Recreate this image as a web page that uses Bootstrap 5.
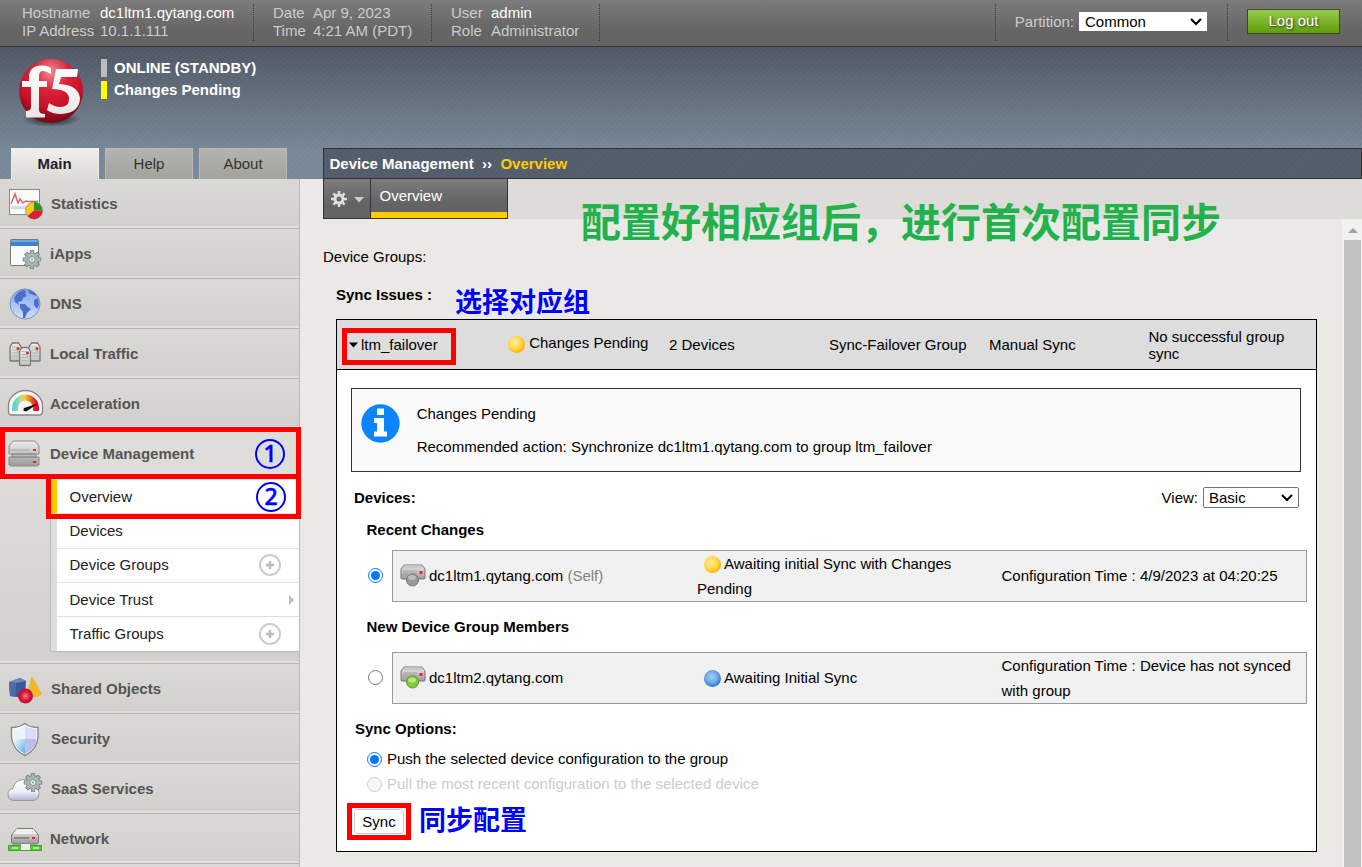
<!DOCTYPE html>
<html lang="en">
<head>
<meta charset="utf-8">
<title>Device Management - Overview</title>
<meta name="viewport" content="width=device-width, initial-scale=1">
<link href="https://cdn.jsdelivr.net/npm/bootstrap@5.3.0/dist/css/bootstrap.min.css" rel="stylesheet">
<style>
body{font-family:"Liberation Sans",Arial,sans-serif;font-size:15px;line-height:18px;color:#000;background:#eae9e5;height:867px;overflow:hidden}
svg{display:block;flex:none}
.topbar{height:47px;background:linear-gradient(#7c7c7c,#646464 70%,#646464);border-bottom:1px solid #333;color:#ccc;padding:4px 0 0 22px}
.sep{width:2px;height:37px;border-left:1px dotted #3a3a3a;flex:none}
.white{color:#fff}
.pick{appearance:none;font-size:15px;line-height:18px;padding:0 0 0 6px;border:0;border-radius:0;color:#000;background:#fff url("data:image/svg+xml,%3Csvg xmlns='http://www.w3.org/2000/svg' width='12' height='8'%3E%3Cpath d='M1 1l5 5 5-5' fill='none' stroke='%23000' stroke-width='2'/%3E%3C/svg%3E") no-repeat right 5px center}
.logout{width:93px;height:25px;margin:5px 22px 0 18px;border:1px solid #3c4a22;border-radius:0;background:linear-gradient(#98c94e,#5f9d08);color:#fff;font-size:15px;line-height:15px;padding:0 0 2px;text-shadow:1px 1px 2px #333}
.band{height:132px;background:repeating-linear-gradient(135deg,rgba(255,255,255,.02) 0 2px,rgba(0,0,0,.012) 2px 4px),linear-gradient(#4f5863,#6a7786 50%,#788999 80%,#788999)}
.leftcol{width:323px;flex:none}
.flagline{border-left:6px solid #bbb;height:18px;padding-left:7px;color:#fff;font-weight:bold}
.maintab{width:88px;height:31px;line-height:30px;text-align:center;background:linear-gradient(#b4b4ae,#a3a39e);border:1px solid #b9bab6;border-bottom:0;color:#333}
.maintab.on{background:linear-gradient(#f0efed,#dbdad6);font-weight:bold;color:#222;border-color:#eee;padding-right:1px}
.crumb{height:31px;border:1px solid #2e3237;background:repeating-linear-gradient(135deg,rgba(255,255,255,.012) 0 2px,rgba(0,0,0,.012) 2px 4px),#545e6a;padding-left:5.500px;line-height:29px;font-weight:bold;color:#fff}
.side{width:300px;height:688px;flex:none;overflow:hidden;background:#dad9d5;border-right:1px solid #b9b9b7}
.mod{height:50px;background:linear-gradient(#dad9d5,#d1d0cc 47px,#e0dfdc 47px);border-bottom:1px solid #b4b4b4;padding:0 0 0 7px;color:#555;font-weight:bold}
.mod svg{width:38px;height:40px;margin-right:5px}
.openmod{background:#dedddA;border-bottom:0}
.subwrap{height:185px;background:linear-gradient(#dddcd8,#d1d0cc 182px,#e0dfdc 182px);border-bottom:1px solid #b4b4b4;padding:1px 0 0 50px}
.subs{border-left:1px solid #bbb;border-bottom:1px solid #bbb;height:172px;margin-right:-1px}
.sub{height:34.3px;background:#fff;border-left:6px solid #ddd;border-bottom:1px solid #e0e0e0;padding-left:12.500px;padding-right:18px;color:#222}
.sub.on{border-left-color:#fc0}
.sub:last-child{border-bottom:0}
.redbox{position:absolute;border:5px solid #f00;z-index:3}
.note{position:absolute;font-family:"Liberation Sans","Noto Sans CJK SC",sans-serif;font-weight:bold;white-space:nowrap;z-index:3;line-height:1;color:#00f}
.ring{position:absolute;width:30px;height:30px;border:2.500px solid #00f;border-radius:50%;color:#00f;font:500 23px/25px "Noto Sans",sans-serif;-webkit-text-stroke:.5px #00f;text-align:center;z-index:3}
.tabstrip{height:40px;background:#dddcd8}
.gearcell,.viewtab{height:40px;border:1px solid #333;border-top:0;background:linear-gradient(#7c7c7c,#636363 65%)}
.gearcell{width:48px;padding-left:6px}
.viewtab{width:137px;border-left:0;color:#fff;padding:8px 0 0 8.500px;box-shadow:inset 0 -6px #fc0}
.scroller{width:20px;height:648px;background:#f1f1f1;flex:none;padding-left:2px}
.thumb{background:#c1c1c1;height:627px;width:17px}
.grid-box{margin:15px 0 0 13px;width:981px;height:533px;background:#fff;border:1px solid #000}
.grid-head{height:50px;background:#ddd;border-bottom:1px solid #000;line-height:17px}
.info{margin:18px 0 0 14px;width:950px;height:84px;border:1px solid #333;background:#fafafa;padding-left:10px}
.dev{width:915px;height:52px;background:#f1f1f1;border:1px solid #999;margin-left:9px;line-height:25px}
.devname{width:304px;padding:0 0 1px 7px}
.dot{display:inline-block;width:17px;height:17px;border-radius:50%;background:radial-gradient(circle at 40% 38%,#fff09a,#ffd33c 50%,#ffb400 68%,#ef9516);vertical-align:-4px}
.dot.blue{background:radial-gradient(circle at 45% 40%,#a8cef5,#6ba7e8 45%,#2f74c8 72%,#2566b4)}
input[type=radio]{width:15px;height:15px;margin:0;flex:none;accent-color:#0075ff}
.syncbtn{width:50px;height:25px;border:1px solid #ccc;border-radius:4px;background:#fff;padding:0;font-size:15px;line-height:20px;color:#000}
</style>
</head>
<body class="position-relative">
<svg width="0" height="0" class="position-absolute">
<defs>
<linearGradient id="gSteel" x2="0" y2="1"><stop stop-color="#eee"/><stop offset="1" stop-color="#999"/></linearGradient>
<linearGradient id="gCase" x2="0" y2="1"><stop stop-color="#eee"/><stop offset="1" stop-color="#c4c4c4"/></linearGradient>
<linearGradient id="gBlue" x2="0" y2="1"><stop stop-color="#7fa6ea"/><stop offset="1" stop-color="#d3dffc"/></linearGradient>
<radialGradient id="gRed" cx=".5" cy=".2" r=".8"><stop stop-color="#f08a94"/><stop offset=".35" stop-color="#dc2238"/><stop offset=".7" stop-color="#c8102a"/><stop offset="1" stop-color="#6c0a16"/></radialGradient>
<linearGradient id="gLetter" x2="0" y2="1"><stop stop-color="#fff"/><stop offset="1" stop-color="#e6e6e6"/></linearGradient>
<radialGradient id="gBall"><stop stop-color="#f57b90"/><stop offset=".6" stop-color="#da1537"/><stop offset="1" stop-color="#c01030"/></radialGradient>
<radialGradient id="gShadow"><stop stop-color="#000" stop-opacity=".8"/><stop offset="1" stop-color="#000" stop-opacity="0"/></radialGradient>
<linearGradient id="gArc"><stop stop-color="#5fd6cf"/><stop offset=".25" stop-color="#a9dfa0"/><stop offset=".45" stop-color="#f6d52c"/><stop offset=".7" stop-color="#f07a28"/><stop offset="1" stop-color="#e0122a"/></linearGradient>
<linearGradient id="gCloud" x2="0" y2="1"><stop stop-color="#fff"/><stop offset=".6" stop-color="#eeeef8"/><stop offset="1" stop-color="#b3b3cf"/></linearGradient>
<linearGradient id="gShield" y2="1"><stop stop-color="#fff"/><stop offset="1" stop-color="#56aee0"/></linearGradient>
<symbol id="cog" viewBox="-10 -10 20 20"><path d="M0-9.200V9.200M-9.200 0H9.200M-6.500-6.500L6.500 6.500M-6.500 6.500L6.500-6.500" stroke="#717b7b" stroke-width="4.200"/><circle r="7.200" fill="#717b7b"/><path d="M0-8.500V8.500M-8.500 0H8.500M-6-6L6 6M-6 6L6-6" stroke="#a9b4b4" stroke-width="2.800"/><circle r="6.500" fill="#a9b4b4"/><circle r="3" fill="#e6ebeb" stroke="#78868a" stroke-width=".8"/><circle r="1" fill="#89a"/></symbol>
<symbol id="srv" viewBox="0 0 13 20"><path d="M1 5L3.500 1h6L12 5v13.500l-1 .5H2l-1-.5z" fill="url(#gCase)" stroke="#777" stroke-width="1.300"/><path d="M3 5h6M3 8h5M3 11h7M3 14h7" stroke="#b5b5b5"/><circle cx="9" cy="6.500" r="1.500" fill="#e2203c"/><circle cx="9" cy="9.500" r="1.200" fill="#8be060"/></symbol>
<symbol id="disk" viewBox="0 0 26 22"><path d="M4 1h18l3 4v9q0 1-1 1H2q-1 0-1-1V5z" fill="url(#gSteel)" stroke="#777"/><path d="M4.500 1.500h17L24 4.500H2z" fill="#c9c9c9"/><path d="M3 7h14M3 9h14M3 11h14" stroke="#999" stroke-width=".8"/><rect x="19.500" y="7" width="3" height="3" fill="#f02030"/></symbol>
</defs>
</svg>

<header class="topbar d-flex">
  <div style="width:78px">Hostname<br>IP Address</div><div style="width:153px"><span class="white">dc1ltm1.qytang.com</span><br>10.1.1.111</div>
  <div class="sep"></div>
  <div style="width:40px;margin-left:18px">Date<br>Time</div><div style="width:118px">Apr 9, 2023<br>4:21 AM (PDT)</div>
  <div class="sep"></div>
  <div style="width:40px;margin-left:18px">User<br>Role</div><div style="width:108px"><span class="white">admin</span><br>Administrator</div>
  <div class="sep"></div>
  <div class="sep ms-auto"></div>
  <label style="margin:9px 0 0 18px" for="partition">Partition:</label>
  <select class="pick" id="partition" style="width:128px;height:19px;margin:8px 20px 0 5px"><option>Common</option></select>
  <div class="sep"></div>
  <button class="btn logout" type="button">Log out</button>
</header>

<div class="band d-flex">
  <div class="leftcol d-flex flex-column justify-content-between">
    <div class="d-flex">
      <svg width="72" height="72" viewBox="0 0 72 72" style="margin:9px 14px 0 15px">
        <ellipse cx="36" cy="63" rx="29" ry="8" fill="url(#gShadow)"/>
        <circle cx="36" cy="35" r="32" fill="url(#gRed)"/>
        <path d="M7 25h7V20Q15 9.500 27 9.500q6 0 9 2.500v6q-5-3-8-3-4 0-4 5v5h8v6h-8v23q0 4 6 4v3.500H11V55q5 0 5-4V31H7z" fill="url(#gLetter)"/>
        <path d="M41 13h22l-1 8H46l-2 7q20 1 21 15Q64 57 46 58q-9 0-14-4l2-7q6 4 11 4 9 0 9-8 0-10-17-10z" fill="url(#gLetter)"/>
      </svg>
      <div style="margin-top:12px"><div class="flagline">ONLINE (STANDBY)</div><div class="flagline" style="border-color:#ff0;margin-top:4px">Changes Pending</div></div>
    </div>
    <nav class="d-flex" style="gap:6px;padding-left:11px">
      <div class="maintab on">Main</div><div class="maintab">Help</div><div class="maintab">About</div>
    </nav>
  </div>
  <div class="flex-grow-1 d-flex flex-column justify-content-end">
    <div class="crumb">Device Management&nbsp; ››&nbsp; <span style="color:#fc0">Overview</span></div>
  </div>
</div>

<div class="d-flex">
<aside class="side">
  <div class="mod d-flex align-items-center"><svg viewBox="0 0 38 40" style="margin-right:6px"><rect x="2.500" y="5.500" width="30" height="25" fill="#fafafa" stroke="#888"/><path d="M4 22h27v3H4z" fill="#cfdcec"/><path d="M4 20l4-10 3 9 2-4 3 4 3-2 3 .5h9" fill="none" stroke="#dd6670" stroke-width="1.500"/><circle cx="27" cy="26.500" r="8.500" fill="#fbc918" stroke="#777" stroke-width=".6"/><path d="M27 26.500V18a8.500 8.500 0 0 1 8.500 8.500z" fill="#2a962a"/><path d="M27 26.500h8.500A8.500 8.500 0 0 1 20.500 32z" fill="#d8203a"/></svg>Statistics</div>
  <div class="mod d-flex align-items-center"><svg viewBox="0 0 38 40"><rect x="3.500" y="5.500" width="28" height="26" rx="1" fill="#fafafa" stroke="#777"/><path d="M4 6h27v6H4z" fill="#3f84cb"/><path d="M4 6h27v2H4z" fill="#6daae4"/><use href="#cog" x="15" y="15.500" width="20" height="20"/></svg>iApps</div>
  <div class="mod d-flex align-items-center"><svg viewBox="0 0 38 40"><circle cx="18" cy="20" r="15" fill="url(#gBlue)" stroke="#8193b8"/><path d="M7 14q3-6 9-8l3 1-1 3 2 2-4 2-1 3-4 1 1 3-4-3zM13 20l5 0 3 3 3 2-4 4-2 5h-2l0-6-3-4zM21 6l6 2 3 4-4-1-4-2zM27 16l4-2 1 7-2 4-3-4z" fill="#4a70c9"/></svg>DNS</div>
  <div class="mod d-flex align-items-center"><svg viewBox="0 0 38 40"><use href="#srv" x="2" y="8" width="13" height="20"/><use href="#srv" x="21" y="8" width="13" height="20"/><use href="#srv" x="11.500" y="12.500" width="13" height="20"/></svg>Local Traffic</div>
  <div class="mod d-flex align-items-center"><svg viewBox="0 0 38 40"><path d="M1.500 29V22a17 15.500 0 0 1 34 0v7l-2 2h-30z" fill="#f7f7f7" stroke="#888" stroke-width="1.300"/><path d="M8 27v-3a10.500 10.500 0 0 1 21 0v3" fill="none" stroke="url(#gArc)" stroke-width="6"/><path d="M31 18.500L20 26q-5 1-3-3z" transform="translate(0 1)" fill="#111"/></svg>Acceleration</div>
  <div class="mod openmod d-flex align-items-center"><svg viewBox="0 0 38 40"><g fill="url(#gSteel)" stroke="#8a8a8a"><path d="M6 7h22l4 5v8H2v-8zM2 23h30v8l-2 1H4l-2-1zM5 20h24v3H5z"/></g><path d="M3 16h19M3 28h19" stroke="#aaa"/><path d="M26 15h3v2h-3zM26 27h3v2h-3z" fill="#f02030"/></svg>Device Management</div>
  <div class="subwrap"><div class="subs">
    <div class="sub on d-flex align-items-center">Overview</div>
    <div class="sub d-flex align-items-center">Devices</div>
    <div class="sub d-flex align-items-center justify-content-between">Device Groups<svg width="24" height="24"><circle cx="12" cy="12" r="10" fill="none" stroke="#ccc" stroke-width="2"/><path d="M12 8v8M8 12h8" stroke="#bbb" stroke-width="2.500"/></svg></div>
    <div class="sub d-flex align-items-center justify-content-between pe-1">Device Trust<svg width="8" height="10"><path d="M1 0l5 5-5 5z" fill="#bbb"/></svg></div>
    <div class="sub d-flex align-items-center justify-content-between">Traffic Groups<svg width="24" height="24"><circle cx="12" cy="12" r="10" fill="none" stroke="#ccc" stroke-width="2"/><path d="M12 8v8M8 12h8" stroke="#bbb" stroke-width="2.500"/></svg></div>
  </div></div>
  <div class="mod d-flex align-items-center"><svg viewBox="0 0 38 40" style="margin-right:6px"><path d="M2 13l11-4 6 3-1 17-15-2z" fill="#3a5797"/><path d="M2 13l11-4 6 3-10 2z" fill="#6f88be"/><path d="M9 14l-.5 14L3 27 2 13z" fill="#4d6bab"/><path d="M25 7l10 18q-5 5-14 3l0-8z" fill="#f3b72b"/><circle cx="18.500" cy="27" r="7.500" fill="url(#gBall)"/></svg>Shared Objects</div>
  <div class="mod d-flex align-items-center"><svg viewBox="0 0 38 40" style="margin-right:6px"><path d="M18 4.500q5 4 13 4v10q-1 12-13 18Q6 31 4.500 18.500v-10q8 0 13.500-4z" fill="#fff" stroke="#888" stroke-width="1.400"/><path d="M18 7v13h11.500q0 9-11.500 15z" fill="#bcbcf0"/><path d="M18 7v13h11.500V10q-6 0-11.500-3z" fill="#dedcfc"/><path d="M18 7v13H6V10q7 0 12-3z" fill="#eef3fb"/><path d="M18 20v15Q7 29 6 20z" fill="url(#gShield)"/></svg>Security</div>
  <div class="mod d-flex align-items-center"><svg viewBox="0 0 38 40" style="margin-right:6px"><path d="M6 31.500q-5-1-5-6 0-5 5-6 1-8 10-9 9 0 11 8 6 2 5 7-1 6-6 6z" fill="url(#gCloud)" stroke="#999"/><use href="#cog" x="16" y="3.500" width="20" height="20"/></svg>SaaS Services</div>
  <div class="mod d-flex align-items-center"><svg viewBox="0 0 38 40"><path d="M10 9.500h16l5.500 6.500v7q0 2-2 2h-23q-2 0-2-2v-7z" fill="url(#gSteel)" stroke="#777"/><path d="M10 10h16l4 5H6z" fill="#eee"/><path d="M7 19h15" stroke="#888" stroke-width="2"/><path d="M25 18h3v2h-3z" fill="#f02030"/><path d="M1.500 26.500h33v5h-33z" fill="#59c93c" stroke="#4b9a38"/><path d="M14 25h9v6h-9z" fill="#eee"/><path d="M5 29h6M26 29h6" stroke="#a6f283" stroke-width="2"/></svg>Network</div>
  <div class="mod"></div>
</aside>

<main class="flex-grow-1" style="padding-left:23px">
  <div class="tabstrip d-flex" style="margin-left:0">
    <div class="gearcell d-flex align-items-center"><svg width="18" height="18" viewBox="-9 -9 18 18"><circle r="4" fill="none" stroke="#ddd" stroke-width="3"/><path d="M0-8v3M0 8V5M-8 0h3M8 0H5M-5.600-5.600l2 2M5.600 5.600l-2-2M-5.600 5.600l2-2M5.600-5.600l-2 2" stroke="#ddd" stroke-width="2.500"/></svg><svg width="10" height="6" style="margin:3px 0 0 6px"><path d="M0 0h10L5 5.500z" fill="#ccc"/></svg></div>
    <div class="viewtab">Overview</div>
  </div>
  <div class="d-flex justify-content-between">
    <div>
      <div style="margin-top:29px">Device Groups:</div>
      <div class="fw-bold" style="margin:20px 0 0 13px">Sync Issues :</div>
      <section class="grid-box">
        <div class="grid-head d-flex align-items-center">
          <div class="d-flex align-items-center" style="width:171px;padding-left:12px"><svg width="9" height="6" style="margin-right:3px"><path d="M0 .5h9L4.500 5.500z" fill="#000"/></svg>ltm_failover</div>
          <div style="width:161px;padding-bottom:2px"><span class="dot" style="vertical-align:-5px"></span> Changes Pending</div>
          <div style="width:160px">2 Devices</div>
          <div style="width:160px">Sync-Failover Group</div>
          <div style="width:159.500px">Manual Sync</div>
          <div style="width:150px">No successful group sync</div>
        </div>
        <div class="info d-flex">
          <svg width="39" height="39" viewBox="0 0 39 39" style="margin:15px 16.700px 0 -1px"><circle cx="19.500" cy="19.500" r="19.200" fill="#0a84ff"/><path d="M16 4.500h7v6.500h-7zM13 14h10v13.500h3V32.500H13V27.500h3V19h-3z" fill="#fff"/></svg>
          <div style="padding-top:16px">Changes Pending<div style="margin-top:15px">Recommended action: Synchronize dc1ltm1.qytang.com to group ltm_failover</div></div>
        </div>
        <div class="d-flex align-items-center" style="margin:14px 17px 0 17px;height:23px"><b>Devices:</b><span class="ms-auto" style="margin-right:5px">View:</span><select class="pick" style="width:96px;height:21px;border:1px solid #767676;border-radius:2px;padding-left:5px"><option>Basic</option></select></div>
        <div class="fw-bold" style="margin:12px 0 0 29.500px">Recent Changes</div>
        <div class="d-flex align-items-center" style="margin:11px 0 0 31px">
          <input type="radio" name="device" checked aria-label="dc1ltm1" style="margin-bottom:2px">
          <div class="dev d-flex align-items-center">
            <div class="devname d-flex align-items-center"><svg width="26" height="23" viewBox="0 0 26 23" style="margin-right:3px"><use href="#disk" width="26" height="22"/><circle cx="12.500" cy="16" r="6" fill="#999" stroke="#777"/><ellipse cx="12" cy="13.500" rx="4" ry="2.500" fill="#bbb"/></svg>dc1ltm1.qytang.com&nbsp;<span style="color:#808080">(Self)</span></div>
            <div style="width:304.500px;padding-right:30px"><span class="dot" style="margin:0 3px 0 7px"></span>Awaiting initial Sync with Changes Pending</div>
            <div style="padding-bottom:1px">Configuration Time : 4/9/2023 at 04:20:25</div>
          </div>
        </div>
        <div class="fw-bold" style="margin:16px 0 0 29.500px">New Device Group Members</div>
        <div class="d-flex align-items-center" style="margin:16px 0 0 31px">
          <input type="radio" name="device" aria-label="dc1ltm2" style="margin-bottom:2px">
          <div class="dev d-flex align-items-center">
            <div class="devname d-flex align-items-center"><svg width="26" height="23" viewBox="0 0 26 23" style="margin-right:3px"><use href="#disk" width="26" height="22"/><circle cx="12.500" cy="16" r="6" fill="#84c83c" stroke="#5b9a2d"/><ellipse cx="12" cy="14" rx="4" ry="2.500" fill="#b8e77c"/></svg>dc1ltm2.qytang.com</div>
            <div style="width:304.500px;padding-bottom:1px"><span class="dot blue" style="margin:0 3px 0 7px"></span>Awaiting Initial Sync</div>
            <div style="width:300px">Configuration Time : Device has not synced with group</div>
          </div>
        </div>
        <div class="fw-bold" style="margin:16px 0 0 18px">Sync Options:</div>
        <label class="d-flex align-items-center" style="margin:12px 0 0 30px;gap:5px"><input type="radio" name="dir" checked>Push the selected device configuration to the group</label>
        <label class="d-flex align-items-center" style="margin:7px 0 0 30px;gap:5px;color:#ccc"><input type="radio" name="dir" disabled>Pull the most recent configuration to the selected device</label>
        <button class="btn syncbtn d-block" type="button" style="margin:16px 0 0 17px">Sync</button>
      </section>
    </div>
    <div class="scroller"><svg width="18" height="21"><path d="M4 14l5-5 5 5z" fill="#a3a3a3"/></svg><div class="thumb"></div></div>
  </div>
</main>
</div>

<div class="redbox" style="left:0;top:427px;width:301px;height:52px"></div>
<div class="redbox" style="left:46px;top:474px;width:255px;height:45px"></div>
<div class="redbox" style="left:342px;top:328px;width:114px;height:37px"></div>
<div class="redbox" style="left:347px;top:803px;width:64px;height:37px"></div>
<div class="ring" style="left:255px;top:439px">1</div>
<div class="ring" style="left:256px;top:482px">2</div>
<div class="note" style="left:581px;top:203px;font-size:40px;color:#22b14c">配置好相应组后，进行首次配置同步</div>
<div class="note" style="left:455px;top:290px;font-size:27px">选择对应组</div>
<div class="note" style="left:419px;top:808px;font-size:27px">同步配置</div>
<script src="https://cdn.jsdelivr.net/npm/bootstrap@5.3.0/dist/js/bootstrap.bundle.min.js"></script>
</body>
</html>
